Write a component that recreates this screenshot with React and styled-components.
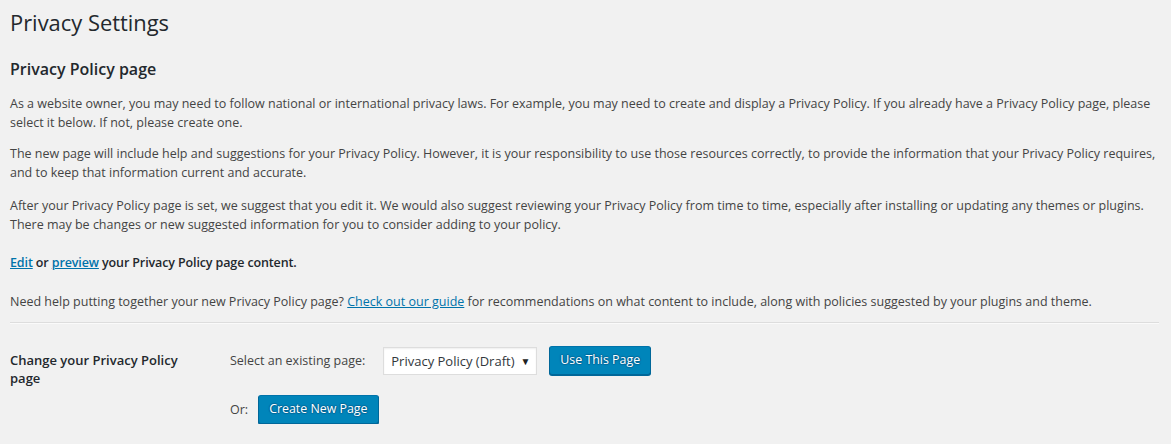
import React from 'react';
import styled, { createGlobalStyle } from 'styled-components';

const GlobalStyle = createGlobalStyle`
  html, body { margin: 0; padding: 0; background: #f1f1f1; }
  body {
    font-family: "Open Sans", "Noto Sans", sans-serif;
    font-size: 12.5px;
    color: #444;
  }
`;

const Wrap = styled.div`
  padding: 0 12px 0 10px;
`;

const Title = styled.h1`
  font-size: 21.9px;
  font-weight: 400;
  line-height: 29px;
  color: #23282d;
  margin: 0;
  padding: 8px 0 4px;
`;

const Heading = styled.h2`
  font-size: 16px;
  font-weight: 600;
  line-height: 22px;
  color: #23282d;
  margin: 17px 0 14px;
`;

const Para = styled.p`
  margin: 0 0 ${p => p.$mb ?? 12}px;
  line-height: 19px;
  font-weight: ${p => (p.$bold ? 600 : 400)};
  letter-spacing: ${p => (p.$bold ? '-0.12px' : 'normal')};
  color: ${p => (p.$bold ? '#23282d' : '#444')};
`;

const Link = styled.a`
  color: #0073aa;
  text-decoration: underline;
  cursor: pointer;
`;

const Divider = styled.hr`
  border: 0;
  border-top: 1px solid #ddd;
  border-bottom: 1px solid #fafafa;
  margin: 11px 0 0;
  height: 0;
`;

const FormRow = styled.div`
  display: grid;
  grid-template-columns: 220px 1fr;
  padding-top: 27px;
`;

const RowLabel = styled.div`
  font-size: 13px;
  font-weight: 600;
  color: #23282d;
  line-height: 18px;
  width: 190px;
`;

const Controls = styled.div`
  display: flex;
  flex-direction: column;
  gap: 20px;
  margin-top: -5px;
`;

const ControlLine = styled.div`
  display: flex;
  align-items: center;
`;

const InlineLabel = styled.span`
  color: #444;
  line-height: 19px;
  margin-right: ${p => p.$mr ?? 0}px;
`;

const SelectBox = styled.div`
  box-sizing: border-box;
  width: 154px;
  height: 28px;
  background: #fff;
  border: 1px solid #ddd;
  box-shadow: inset 0 1px 2px rgba(0, 0, 0, 0.07);
  display: flex;
  align-items: center;
  justify-content: space-between;
  padding: 0 6px 0 7px;
  color: #32373c;
  font-size: 13px;
`;

const Caret = styled.span`
  font-size: 10px;
  color: #222;
  line-height: 1;
`;

const Button = styled.button`
  box-sizing: border-box;
  height: 29px;
  padding: 0 10px 1px;
  font-family: "Open Sans", "Noto Sans", sans-serif;
  font-size: 12.4px;
  line-height: 26px;
  color: #fff;
  background: #0085ba;
  border: 1px solid;
  border-color: #0073aa #006799 #006799;
  border-radius: 3px;
  box-shadow: 0 1px 0 #006799;
  text-shadow: 0 -1px 1px #006799, 1px 0 1px #006799, 0 1px 1px #006799, -1px 0 1px #006799;
  cursor: pointer;
  margin-left: ${p => p.$ml ?? 0}px;
`;

export default function App() {
  return (
    <>
      <GlobalStyle />
      <Wrap>
        <Title>Privacy Settings</Title>
        <Heading>Privacy Policy page</Heading>
        <Para>
          As a website owner, you may need to follow national or international privacy laws. For example, you may need to create and display a Privacy Policy. If you already have a Privacy Policy page, please select it below. If not, please create one.
        </Para>
        <Para $mb={14}>
          The new page will include help and suggestions for your Privacy Policy. However, it is your responsibility to use those resources correctly, to provide the information that your Privacy Policy requires, and to keep that information current and accurate.
        </Para>
        <Para $mb={19}>
          After your Privacy Policy page is set, we suggest that you edit it. We would also suggest reviewing your Privacy Policy from time to time, especially after installing or updating any themes or plugins. There may be changes or new suggested information for you to consider adding to your policy.
        </Para>
        <Para $bold $mb={20}>
          <Link>Edit</Link> or <Link>preview</Link> your Privacy Policy page content.
        </Para>
        <Para $mb={0}>
          Need help putting together your new Privacy Policy page? <Link>Check out our guide</Link> for recommendations on what content to include, along with policies suggested by your plugins and theme.
        </Para>
        <Divider />
        <FormRow>
          <RowLabel>Change your Privacy Policy page</RowLabel>
          <Controls>
            <ControlLine>
              <InlineLabel $mr={18}>Select an existing page:</InlineLabel>
              <SelectBox>
                <span>Privacy Policy (Draft)</span>
                <Caret>▼</Caret>
              </SelectBox>
              <Button $ml={12}>Use This Page</Button>
            </ControlLine>
            <ControlLine>
              <InlineLabel $mr={10}>Or:</InlineLabel>
              <Button>Create New Page</Button>
            </ControlLine>
          </Controls>
        </FormRow>
      </Wrap>
    </>
  );
}
